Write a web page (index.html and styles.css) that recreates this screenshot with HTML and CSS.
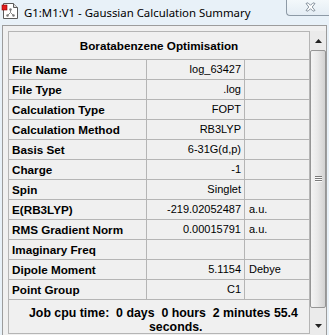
FILE: index.html
```html
<!DOCTYPE html>
<html lang="en">
<head>
    <meta charset="UTF-8">
    <meta name="viewport" content="width=device-width, initial-scale=1.0">
    <title>G1:M1:V1 - Gaussian Calculation Summary</title>
    <link rel="stylesheet" href="styles.css">
</head>
<body>
    <div class="titlebar">
        <svg class="app-icon" width="20" height="22" viewBox="0 0 20 22">
            <path d="M3.5 3.5H13.5L17.5 7.5V18.5H3.5Z" fill="#fff" stroke="#5a5a5a"/>
            <path d="M13.5 3.5V7.5H17.5" fill="#ddd" stroke="#5a5a5a"/>
            <path d="M10.5 9.5V12.5M10.5 12.5L7.5 15.5M10.5 12.5L13.5 15.5" stroke="#8a8a8a" fill="none"/>
            <circle cx="10.5" cy="9.5" r="1.2" fill="#777"/>
            <circle cx="7.5" cy="15.5" r="1.2" fill="#777"/>
            <circle cx="13.5" cy="15.5" r="1.2" fill="#777"/>
            <rect x="2" y="5" width="5" height="5" fill="#e21b1b" stroke="#8a0000" stroke-width="0.6"/>
        </svg>
        <span class="title">G1:M1:V1 - Gaussian Calculation Summary</span>
        <div class="close">
            <svg width="11" height="10" viewBox="0 0 11 10">
                <path d="M1 1.5L3 0.8L5.5 3.3L8 0.8L10 1.5L7.2 5L10 8.5L8 9.2L5.5 6.7L3 9.2L1 8.5L3.8 5Z" fill="#fff" stroke="#7d8a96" stroke-width="0.9" stroke-linejoin="round"/>
            </svg>
        </div>
    </div>

    <div class="frame">
        <div class="sheet">
            <div class="head">Boratabenzene Optimisation</div>

            <div class="cell label">File Name</div>
            <div class="cell value">log_63427</div>
            <div class="cell unit"></div>

            <div class="cell label">File Type</div>
            <div class="cell value">.log</div>
            <div class="cell unit"></div>

            <div class="cell label">Calculation Type</div>
            <div class="cell value">FOPT</div>
            <div class="cell unit"></div>

            <div class="cell label">Calculation Method</div>
            <div class="cell value">RB3LYP</div>
            <div class="cell unit"></div>

            <div class="cell label">Basis Set</div>
            <div class="cell value">6-31G(d,p)</div>
            <div class="cell unit"></div>

            <div class="cell label">Charge</div>
            <div class="cell value">-1</div>
            <div class="cell unit"></div>

            <div class="cell label">Spin</div>
            <div class="cell value">Singlet</div>
            <div class="cell unit"></div>

            <div class="cell label">E(RB3LYP)</div>
            <div class="cell value">-219.02052487</div>
            <div class="cell unit">a.u.</div>

            <div class="cell label">RMS Gradient Norm</div>
            <div class="cell value">0.00015791</div>
            <div class="cell unit">a.u.</div>

            <div class="cell label">Imaginary Freq</div>
            <div class="cell value"></div>
            <div class="cell unit"></div>

            <div class="cell label">Dipole Moment</div>
            <div class="cell value">5.1154</div>
            <div class="cell unit">Debye</div>

            <div class="cell label">Point Group</div>
            <div class="cell value">C1</div>
            <div class="cell unit"></div>

            <div class="foot">
                <span class="foot-line">Job cpu time:&nbsp; 0 days&nbsp; 0 hours&nbsp; 2 minutes 55.4</span>
                <span class="foot-line second">seconds.</span>
            </div>
        </div>

        <div class="scrollbar">
            <div class="arrow">
                <svg width="7" height="4" viewBox="0 0 7 4"><path d="M3.5 0L7 4H0Z" fill="#222"/></svg>
            </div>
            <div class="thumb"><span class="grip"></span></div>
            <div class="track"></div>
            <div class="arrow">
                <svg width="7" height="4" viewBox="0 0 7 4"><path d="M0 0H7L3.5 4Z" fill="#222"/></svg>
            </div>
        </div>
    </div>
</body>
</html>
```

FILE: styles.css
```css
body{
    margin: 0;
    width: 329px;
    height: 335px;
    overflow: hidden;
    background-color: #e8f1f8;
    font-family: "Liberation Sans", Arial, sans-serif;
    color: #000;
}

/* window title */
.titlebar{
    display: flex;
    align-items: flex-start;
    height: 25px;
}
.app-icon{
    display: block;
    flex: none;
}
.title{
    font-family: "Noto Sans", sans-serif;
    font-size: 11.4px;
    line-height: 25px;
    margin-left: 4px;
    white-space: nowrap;
}
.close{
    margin-left: auto;
    width: 42px;
    height: 15px;
    border-left: 1px solid #8d9aa6;
    border-bottom: 1px solid #8d9aa6;
    border-bottom-left-radius: 4px;
    background: linear-gradient(#f3f8fb, #e4edf4);
}
.close svg{
    display: block;
    margin: 2px 0 0 18px;
}

/* panel */
.frame{
    display: flex;
    align-items: flex-start;
    margin-left: 2px;
    width: 318px;
    height: 310px;
    padding: 5px 0 0 5px;
    border: 1px solid #9c9c9c;
    border-bottom: 0;
    background-color: #f0f0f0;
}

.sheet{
    flex: none;
    display: grid;
    grid-template-columns: 138px 98px 65px;
    border-left: 1px solid #b5b5b5;
    border-top: 1px solid #b5b5b5;
}
.head, .cell, .foot{
    border-right: 1px solid #b5b5b5;
    border-bottom: 1px solid #b5b5b5;
    overflow: hidden;
    white-space: nowrap;
}
.head{
    grid-column: 1 / -1;
    height: 27px;
    line-height: 27px;
    text-align: center;
    font-weight: bold;
    font-size: 11.7px;
}
.cell{
    height: 19px;
    line-height: 19px;
    font-size: 11px;
}
.label{
    padding-left: 3px;
    font-weight: bold;
    font-size: 11.7px;
}
.value{
    text-align: right;
    padding-right: 3px;
}
.unit{
    padding-left: 4px;
}
.foot{
    grid-column: 1 / -1;
    height: 27px;
    padding-top: 6px;
    overflow: visible;
    font-weight: bold;
    font-size: 12.35px;
    line-height: 14px;
}
.foot-line{
    display: block;
    padding-left: 20px;
}
.foot-line.second{
    padding-left: 140px;
}

/* scrollbar */
.scrollbar{
    flex: none;
    width: 16px;
    display: flex;
    flex-direction: column;
    background-color: #ebebeb;
}
.arrow{
    height: 19px;
    display: flex;
    align-items: center;
    justify-content: center;
}
.arrow svg{
    display: block;
}
.thumb{
    height: 256px;
    border: 1px solid #969696;
    border-radius: 2px;
    background: linear-gradient(to right, #f4f4f4, #e9e9e9 45%, #d2d2d2);
    display: flex;
    align-items: center;
    justify-content: center;
}
.grip{
    width: 7px;
    height: 6px;
    background: repeating-linear-gradient(to bottom, #7a7a7a 0 1px, #fafafa 1px 2px);
}
.track{
    height: 8px;
}
```
